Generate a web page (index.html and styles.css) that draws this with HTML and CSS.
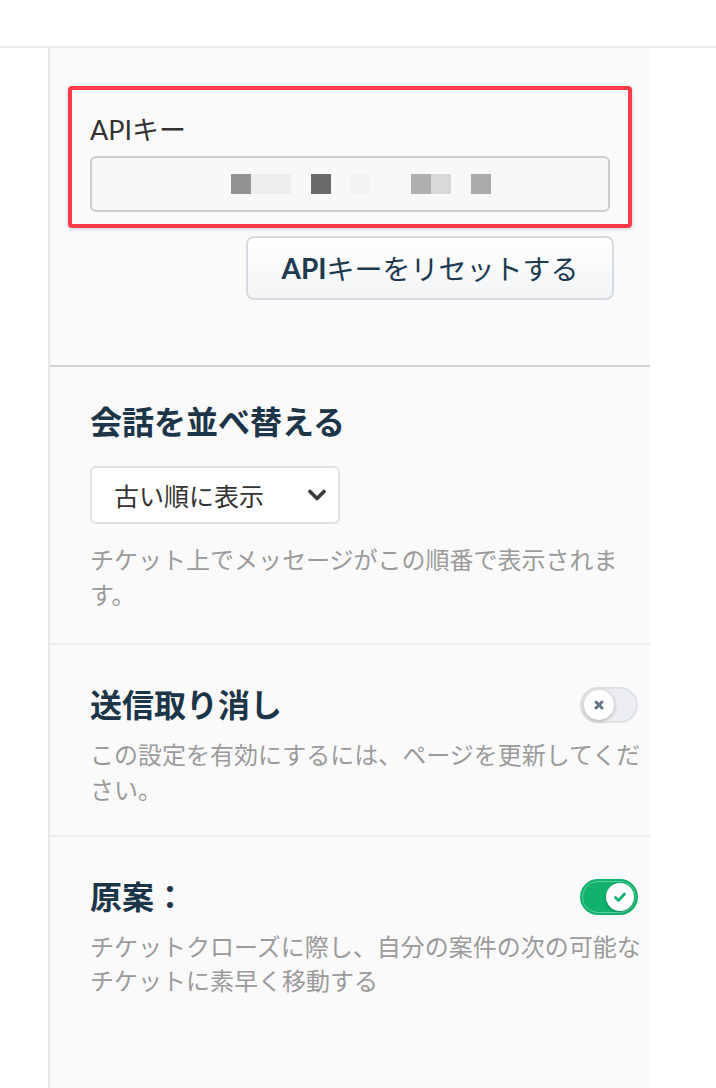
FILE: index.html
```html
<!DOCTYPE html>
<html lang="ja">
<head>
    <meta charset="UTF-8">
    <meta name="viewport" content="width=device-width, initial-scale=1.0">
    <title>設定</title>
    <link rel="stylesheet" href="styles.css">
</head>
<body>
    <div class="topbar"></div>

    <div class="panel">
        <div class="section section-api">
            <div class="apibox">
                <div class="label">APIキー</div>
                <div class="keyfield">
                    <span class="px" style="background:#939393"></span>
                    <span class="px wide" style="background:#eeeeee"></span>
                    <span class="px" style="background:#f8f8f8"></span>
                    <span class="px" style="background:#6a6a6a"></span>
                    <span class="px" style="background:#f8f8f8"></span>
                    <span class="px" style="background:#f3f3f3"></span>
                    <span class="px wide" style="background:#f8f8f8"></span>
                    <span class="px" style="background:#afafaf"></span>
                    <span class="px" style="background:#d9d9d9"></span>
                    <span class="px" style="background:#f8f8f8"></span>
                    <span class="px" style="background:#aaaaaa"></span>
                </div>
            </div>
            <div class="buttonrow">
                <span class="resetbutton"><b>API</b>キーをリセットする</span>
            </div>
        </div>

        <div class="section section-sort">
            <h2>会話を並べ替える</h2>
            <div class="select">
                <span>古い順に表示</span>
                <svg width="18" height="12" viewBox="0 0 18 12"><path d="M2 2.5l7 7 7-7" fill="none" stroke="#3a3a3a" stroke-width="3.6" stroke-linecap="round" stroke-linejoin="round"/></svg>
            </div>
            <p class="desc">チケット上でメッセージがこの順番で表示されます。</p>
        </div>

        <div class="section section-undo">
            <div class="titlerow">
                <h2>送信取り消し</h2>
                <span class="toggle">
                    <span class="knob">
                        <svg width="12" height="12" viewBox="0 0 12 12"><path d="M3 3l6 6M9 3l-6 6" stroke="#687583" stroke-width="3" stroke-linecap="round"/></svg>
                    </span>
                </span>
            </div>
            <p class="desc">この設定を有効にするには、ページを更新してください。</p>
        </div>

        <div class="section section-draft">
            <div class="titlerow">
                <h2>原案：</h2>
                <span class="toggle on">
                    <span class="knob">
                        <svg width="14" height="12" viewBox="0 0 14 12"><path d="M2.5 6.5l3 3 6-6.5" fill="none" stroke="#12b16c" stroke-width="2.8" stroke-linecap="round" stroke-linejoin="round"/></svg>
                    </span>
                </span>
            </div>
            <p class="desc">チケットクローズに際し、自分の案件の次の可能なチケットに素早く移動する</p>
        </div>
    </div>
</body>
</html>
```

FILE: styles.css
```css
* {
    box-sizing: border-box;
}
body {
    margin: 0;
    background: #fff;
    font-family: Lato, "Noto Sans CJK JP", sans-serif;
    color: #333;
}
.topbar {
    height: 48px;
    border-bottom: 2px solid #ececec;
}
.panel {
    margin-left: 48px;
    width: 602px;
    min-height: 1040px;
    background: #fafafa;
    border-left: 2px solid #e8e8e8;
}
.section {
    padding: 0 4px 0 40px;
}
.section h2 {
    margin: 0;
    font-size: 32px;
    line-height: 40px;
    font-weight: 700;
    color: #1d3549;
}
.desc {
    margin: 0;
    font-size: 24px;
    line-height: 35px;
    color: #9b9b9b;
}

/* api key */
.section-api {
    padding: 38px 18px 65px 18px;
    border-bottom: 2px solid #d0d0d0;
}
.apibox {
    border: 4px solid #fd3a47;
    border-radius: 4px;
    padding: 25px 18px 12px 18px;
    box-shadow: 0 1px 4px rgba(0, 0, 0, 0.18);
}
.label {
    font-size: 27px;
    line-height: 30px;
    color: #333;
    margin-bottom: 11px;
}
.keyfield {
    height: 56px;
    background: #f8f8f8;
    border: 2px solid #cccccc;
    border-radius: 6px;
    display: flex;
    align-items: center;
    padding-left: 139px;
}
.px {
    width: 20px;
    height: 20px;
}
.px.wide {
    width: 40px;
}
.buttonrow {
    display: flex;
    justify-content: flex-end;
    margin-top: 8px;
    padding-right: 18px;
}
.resetbutton {
    display: flex;
    align-items: center;
    justify-content: center;
    width: 368px;
    height: 64px;
    border: 2px solid #d6dce2;
    border-radius: 8px;
    background: linear-gradient(#ffffff, #f2f4f6);
    font-size: 28px;
    color: #1e3a50;
}
.resetbutton b {
    font-weight: 700;
}

/* sort */
.section-sort {
    padding-top: 35px;
    padding-bottom: 31px;
    border-bottom: 2px solid #ececec;
}
.select {
    margin: 24px 0 18px 0;
    width: 250px;
    height: 58px;
    background: #fff;
    border: 2px solid #dbe1e7;
    border-radius: 6px;
    display: flex;
    align-items: center;
    justify-content: space-between;
    padding: 0 12px 0 22px;
    font-size: 25px;
    color: #333;
}

/* toggles */
.titlerow {
    display: flex;
    align-items: center;
    justify-content: space-between;
    padding-right: 8px;
}
.toggle {
    width: 58px;
    height: 36px;
    border-radius: 18px;
    background: #eceef1;
    border: 2px solid #dfe3e7;
    display: flex;
    align-items: center;
    padding: 0 2px;
}
.toggle .knob {
    width: 30px;
    height: 30px;
    border-radius: 50%;
    background: #fff;
    box-shadow: 0 1px 4px rgba(0, 0, 0, 0.28);
    display: flex;
    align-items: center;
    justify-content: center;
}
.toggle.on {
    background: #12b16c;
    border-color: #12b16c;
    box-shadow: inset 0 0 0 1px #5fcf9d;
    justify-content: flex-end;
}
.toggle.on .knob {
    width: 28px;
    height: 28px;
    box-shadow: 0 1px 3px rgba(0, 0, 0, 0.25);
}
.section-undo {
    padding-top: 40px;
    padding-bottom: 28px;
    border-bottom: 2px solid #ececec;
}
.section-undo .desc {
    margin-top: 12px;
}
.section-draft {
    padding-top: 40px;
}
.section-draft .desc {
    margin-top: 13px;
    line-height: 34px;
}
```
